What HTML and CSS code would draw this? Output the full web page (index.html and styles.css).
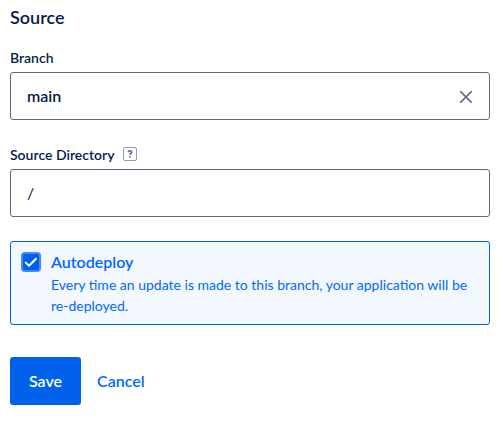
FILE: index.html
```html
<!DOCTYPE html>
<html lang="en">
<head>
<meta charset="utf-8">
<meta name="viewport" content="width=device-width, initial-scale=1">
<title>Source</title>
<link rel="stylesheet" href="styles.css">
</head>
<body>
<form class="source-form">
  <h2 class="title">Source</h2>
  <div class="field">
    <div class="label-row"><label for="branch">Branch</label></div>
    <div class="control">
      <input class="input input-strong" id="branch" type="text" value="main">
      <button class="clear" type="button" aria-label="Clear branch">
        <svg width="12" height="12" viewBox="0 0 12 12" fill="none" stroke="currentColor" stroke-width="1.5" stroke-linecap="round"><path d="M.6.6l10.8 10.8M11.4.6L.6 11.4"/></svg>
      </button>
    </div>
  </div>
  <div class="field">
    <div class="label-row">
      <label for="directory">Source Directory</label>
      <button class="help" type="button" aria-label="Help">
        <svg width="14" height="14" viewBox="0 0 14 14" fill="none"><rect x=".5" y=".5" width="13" height="13" rx="1.5" stroke="#929dbb"/><path d="M5.2 5.2C5.2 3.2 8.8 3.2 8.8 5.2C8.8 6.4 7 6.5 7 8" stroke="#5b6987" stroke-width="1.5"/><path d="M7 9v1.6" stroke="#5b6987" stroke-width="1.6"/></svg>
      </button>
    </div>
    <div class="control"><input class="input" id="directory" type="text" value="/"></div>
  </div>
  <div class="notice">
    <input class="checkbox" id="autodeploy" type="checkbox" aria-describedby="autodeploy-text" checked>
    <div class="notice-body">
      <label class="notice-title" for="autodeploy">Autodeploy</label>
      <p class="notice-text" id="autodeploy-text">Every time an update is made to this branch, your application will be re-deployed.</p>
    </div>
  </div>
  <div class="actions">
    <button class="save" type="submit">Save</button>
    <a class="cancel" href="#">Cancel</a>
  </div>
</form>
</body>
</html>
```
FILE: styles.css
```css
* { box-sizing: border-box; }

body {
  margin: 0;
  background: #fff;
  color: #031b4e;
  font-family: Lato, "Liberation Sans", sans-serif;
  font-size: 16px;
}

button, input { font: inherit; }

.source-form { padding: 5px 13px 20px 10px; }

.title {
  margin: 0 0 18px;
  font-size: 18px;
  line-height: 24px;
  font-weight: 600;
}

.field { margin-bottom: 24px; }

.label-row {
  display: flex;
  align-items: center;
  gap: 8px;
  height: 20px;
  margin-bottom: 5px;
  font-size: 14px;
  font-weight: 600;
}

.help {
  display: flex;
  padding: 0;
  border: 0;
  background: none;
}

.control {
  display: flex;
  align-items: center;
  height: 48px;
  border: 1px solid #5b6987;
  border-radius: 3px;
}

.input {
  flex: 1;
  min-width: 0;
  height: 100%;
  padding: 0 16px 2px;
  border: 0;
  outline: 0;
  background: none;
  color: #031b4e;
}

.input-strong { font-weight: 600; }

.clear {
  display: flex;
  margin-right: 9px;
  padding: 9px 8px 8px;
  border: 0;
  background: none;
  color: #5b6987;
}

.notice {
  display: flex;
  gap: 10px;
  padding: 10px 10px 8px;
  border: 1px solid #0061eb;
  border-radius: 3px;
  background: #f3f8ff;
  color: #0069ff;
}

.checkbox {
  flex: none;
  appearance: none;
  width: 20px;
  height: 20px;
  margin: 0;
  border: 2px solid #3d8bff;
  border-radius: 4px;
  background: #0061eb url("data:image/svg+xml,%3Csvg xmlns='http://www.w3.org/2000/svg' viewBox='0 0 16 16'%3E%3Cpath d='M2.7 8.6l3.3 3.2 7-7' fill='none' stroke='white' stroke-width='2' stroke-linecap='round' stroke-linejoin='round'/%3E%3C/svg%3E") center / 16px 16px no-repeat;
}

.notice-title {
  display: block;
  margin-bottom: 2px;
  font-weight: 600;
  line-height: 20px;
}

.notice-text {
  margin: 0;
  font-size: 14px;
  line-height: 21px;
}

.actions {
  display: flex;
  align-items: center;
  gap: 16px;
  margin-top: 32px;
  font-weight: 600;
}

.save {
  height: 48px;
  padding: 0 19px 2px;
  border: 0;
  border-radius: 3px;
  background: #0061eb;
  color: #fff;
}

.cancel {
  padding-bottom: 2px;
  color: #0069ff;
  text-decoration: none;
}
```
